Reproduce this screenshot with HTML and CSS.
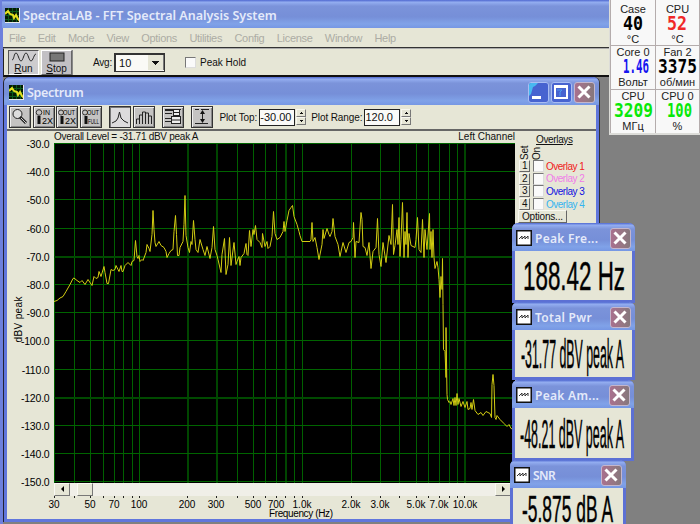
FILE: index.html
```html
<!DOCTYPE html>
<html lang="en">

<head>
    <meta charset="utf-8">
    <title>SpectraLAB - FFT Spectral Analysis System</title>
    <link rel="stylesheet" href="styles.css">
</head>

<body>
    <!-- Shared icons -->
    <svg class="defs" width="0" height="0">
        <symbol id="app-icon" viewBox="0 0 15 15">
            <rect width="15" height="15" fill="#061a06"/>
            <path d="M3.5 0v15M7.5 0v15M11.5 0v15M0 3.5h15M0 7.5h15M0 11.5h15" stroke="#0b5a1c"/>
            <path d="M0 6l3-3 2 3 3 1 1 3 2-3 2 4 2 2" fill="none" stroke="#e6e020" stroke-width="2"/>
            <path d="M0 14.5h15M14.5 0v15" stroke="#e8e8e8"/>
        </symbol>
        <symbol id="wave-icon" viewBox="0 0 16 16">
            <rect x=".75" y=".75" width="14.5" height="14.5" fill="#fff" stroke="#111" stroke-width="1.5"/>
            <path d="M3 9l3-3v3l3-3v3l3-3v3" fill="none" stroke="#333"/>
        </symbol>
        <symbol id="close-icon" viewBox="0 0 20 20">
            <path d="M4.5 4.5l11 11M15.5 4.5l-11 11" stroke="#fff" stroke-width="3"/>
        </symbol>
    </svg>

    <!-- Main window -->
    <div class="main-window">
        <div class="titlebar main-title">
            <svg class="app-icon"><use href="#app-icon"/></svg>
            <span>SpectraLAB - FFT Spectral Analysis System</span>
        </div>
        <div class="menu">
            <span>File</span><span>Edit</span><span>Mode</span><span>View</span><span>Options</span><span>Utilities</span><span>Config</span><span>License</span><span>Window</span><span>Help</span>
        </div>
        <div class="toolbar">
            <div class="big-btn pressed">
                <svg width="26" height="12" viewBox="0 0 26 12"><path d="M1 9C3 9 3 2 5 2s3 8 5 8 3-8 5-8 3 8 5 8 3-7 5-7" fill="none" stroke="#222"/></svg>
                <span><u>R</u>un</span>
            </div>
            <div class="big-btn">
                <svg width="16" height="12" viewBox="0 0 16 12"><rect x="1" y="2" width="14" height="8" fill="#777" stroke="#222"/></svg>
                <span><u>S</u>top</span>
            </div>
            <span class="avg-label">Avg:</span>
            <div class="select"><span>10</span><i></i></div>
            <span class="check"></span>
            <span>Peak Hold</span>
        </div>

        <div class="child-window">
            <div class="titlebar child-title">
                <svg class="app-icon"><use href="#app-icon"/></svg>
                <span class="caption">Spectrum</span>
                <div class="win-btn"><svg width="20" height="20"><path d="M1 14V1h9L7 4 5 5 3 12z" fill="#48b8f0"/><rect x="4" y="14" width="9" height="3" fill="#fff"/></svg></div>
                <div class="win-btn"><svg width="20" height="20"><path d="M3 4.5h14" stroke="#fff" stroke-width="3"/><path d="M4 4v12h12V4" fill="none" stroke="#fff" stroke-width="2"/><path d="M6 8h5l-2 2v4" fill="none" stroke="#4c9cf0"/></svg></div>
                <div class="win-btn close"><svg width="20" height="20"><use href="#close-icon"/></svg></div>
            </div>
            <div class="plot-tools">
                <div class="tool"><svg width="20" height="20"><circle cx="7.500" cy="7" r="4.500" fill="#ddd" stroke="#222"/><path d="M10 10l6 6" stroke="#222" stroke-width="3"/><path d="M11 11l5 5" stroke="#ccc"/></svg></div>
                <div class="tool"><svg width="20" height="20"><circle cx="5" cy="5.500" r="2.800" fill="none" stroke="#333"/><path d="M5 9v8" stroke="#111" stroke-width="3"/><text x="9" y="8">IN</text><text x="8" y="17" class="large">2X</text></svg></div>
                <div class="tool"><svg width="20" height="20"><circle cx="4" cy="5.500" r="2.500" fill="none" stroke="#333"/><path d="M5 9v8" stroke="#111" stroke-width="3"/><text x="6" y="8" textLength="12" lengthAdjust="spacingAndGlyphs">OUT</text><text x="8" y="17" class="large">2X</text></svg></div>
                <div class="tool"><svg width="20" height="20"><circle cx="4" cy="5.500" r="2.500" fill="none" stroke="#333"/><path d="M5 9v8" stroke="#111" stroke-width="3"/><text x="6" y="8" textLength="12" lengthAdjust="spacingAndGlyphs">OUT</text><text x="7" y="17" textLength="11" lengthAdjust="spacingAndGlyphs">FULL</text></svg></div>
                <div class="tool on gap"><svg width="20" height="20"><path d="M2 16l4-2 2-3 1.500-6L11 11l3 3 4 2" fill="none" stroke="#222"/></svg></div>
                <div class="tool"><svg width="20" height="20"><path d="M2.500 17v-5h3v5V8h3v9V5h3v12V6h3v11V9h3v8" fill="none" stroke="#222"/></svg></div>
                <div class="tool gap"><svg width="20" height="20"><path d="M2 3.500h10M2 6.500h7M2 11.500h7M2 14.500h7" stroke="#222"/><rect x="10.500" y="2.500" width="6" height="6" fill="#eee" stroke="#222"/><rect x="8.500" y="9.500" width="9" height="7" fill="#eee" stroke="#222"/><path d="M2 2.500h16M11 5.500h6M9 13h8" stroke="#222"/></svg></div>
                <div class="tool gap"><svg width="20" height="20"><path d="M3 2.500h4M3 16.500h13M9 2.500h8M10.500 5v9" stroke="#222"/><path d="M10.500 3l-2.500 4h5zM10.500 16l-2.500-4h5z" fill="#111"/></svg></div>
                <span class="tool-label">Plot Top:</span><div class="num">-30.00</div><div class="spin"><i></i><i></i></div>
                <span class="tool-label">Plot Range:</span><div class="num">120.0</div><div class="spin"><i></i><i></i></div>
            </div>
            <div class="plot-body">
                <div class="plot-col">
                    <div class="plot-head"><span class="level">Overall Level = -31.71 dBV peak A</span><span>Left Channel</span></div>
                    <svg class="plot" id="plot" width="461" height="340" viewBox="54 143.500 461 340">
                        <rect x="54" y="143.500" width="461" height="340" fill="#000"/>
                        <g id="grid"></g>
                        <polyline class="trace" points="54,302 57,301 60,298.500 63,297 66,292 70,285 73,279 74,278.500 77,281 80,283 82,281 85,285 88,280 92,286 94,277 96,279 98,278 99,272 101,277 104,267 105,273 107,284 108.500,284 111,270 113,271 115,270 116,266 118,270 119,272 121,266 122,272 123,272 125,266 128,263 131,266 132,262 134,261 135.500,241 137,257 138,259 139,256 140,262 142,260 143,261 146,253 147,245 149,249 150,252 152,235 153,211 154,230 155,243 156,247 159,242 161,246 164,248 166,252 167,258 169,254 171,251 173,250 174,232 175.500,216 176.500,235 177.500,256 179,256 180,248 183,242 184,225 185,196 186,236 188,248 189.500,253 191,242 192,245 193.500,221 195,240 196,250 198,253 200,240 203,250 205,256 207,247 210,259 212,248 213.500,227 215,250 217,256 218,260 221,273 222,255 224.500,239 226,275 228,265 229.500,238 231,266 234,243 236,265 237,262 239,257 240,266 241,258 244,254 246,244 247,255 248,256 249.500,231 251,247 253,230 254,235 255.500,226 257,240 260,243 262,248 262.500,234 265,247 267,242 268,249 270,247 272,237 273.500,212 275,234 277,240 280,238 283,232 284,222 285,232 287,221 289,211 291,208 292.500,206 294,217 297,225 299,232 300,236 302,242 310,242 311,240 312,223 313,242 315,238 317,248 319,260 322,245 323,230 324,239 327,229 329,235 330,237 332,232 333,219 335,237 338,245 340,257 343,243 346,253 349,243 351,242 353,238 353.500,223 355,258 356,242 359,243 361,213 362,220 363,247 365,248 367,256 369,243 371,269 373,252 376,248 377.500,219 379,255 381,267 383,243 386,263 389,236 391,245 392.500,205 393.500,255 395,246 397,230 398,245 399,218 400,257 401,240 402.500,203 404,258 405,232 406,245 407,213 408,258 409,234 411,246 415,248 416,240 417.500,218 419,250 421,253 422.500,220 424,258 425,230 427,250 429.500,214 430,250 431,232 432,258 433,230 434,258 435,269 437,262 438,268 439,280 440,298 441,277 442,290 442.500,259 443,305 443.500,350 445,352 446,378 446,328 447,395 447.500,400 449,403 450,402 451,405 453,399 454,406 455,398 456,406 457,394 458,405 459,399 461,407 463,402 465,408 467,402 468,410 470,409 471,403 472,410 473.500,400 475,411 478,415 481,413 483,416 486,412 490,414 491.500,418 492,385 493,375 494,386 495,418 496,420 497,416 500,420 504,424 507,427 509,425 511,429 515,430"/>
                        <text class="axis-title" transform="translate(22 343) rotate(-90)" textLength="46">dBV peak</text>
                    </svg>
                    <div class="scroll"><span class="arrow left"></span><span class="thumb"></span><span class="arrow right"></span></div>
                    <svg class="xaxis" id="xaxis" width="461" height="21" viewBox="54 496 461 21">
                        <text x="269" y="517" textLength="64">Frequency (Hz)</text>
                    </svg>
                </div>
                <div class="overlays">
                    <div class="ov-head">Overlays</div>
                    <div class="ov-cols"><span>Set</span><span>On</span></div>
                    <div class="ov-row"><b>1</b><i></i><span class="c1">Overlay 1</span></div>
                    <div class="ov-row"><b>2</b><i></i><span class="c2">Overlay 2</span></div>
                    <div class="ov-row"><b>3</b><i></i><span class="c3">Overlay 3</span></div>
                    <div class="ov-row"><b>4</b><i></i><span class="c4">Overlay 4</span></div>
                    <div class="ov-options">Options...</div>
                </div>
            </div>
        </div>
    </div>

    <!-- Floating readouts -->
    <div class="readout peak-freq">
        <div class="titlebar"><svg class="wave"><use href="#wave-icon"/></svg><span class="caption">Peak Fre...</span><div class="win-btn close"><svg width="20" height="20"><use href="#close-icon"/></svg></div></div>
        <svg class="value" height="49"><text x="8" y="39" font-size="40" textLength="102" lengthAdjust="spacingAndGlyphs">188.42 Hz</text></svg>
    </div>
    <div class="readout total-pwr">
        <div class="titlebar"><svg class="wave"><use href="#wave-icon"/></svg><span class="caption">Total Pwr</span><div class="win-btn close"><svg width="20" height="20"><use href="#close-icon"/></svg></div></div>
        <svg class="value" height="48"><text x="6" y="38" font-size="40" textLength="103" lengthAdjust="spacingAndGlyphs">-31.77 dBV peak A</text></svg>
    </div>
    <div class="readout peak-amp">
        <div class="titlebar"><svg class="wave"><use href="#wave-icon"/></svg><span class="caption">Peak Am...</span><div class="win-btn close"><svg width="20" height="20"><use href="#close-icon"/></svg></div></div>
        <svg class="value" height="52"><text x="5" y="40" font-size="41" textLength="104" lengthAdjust="spacingAndGlyphs">-48.21 dBV peak A</text></svg>
    </div>
    <div class="readout snr">
        <div class="titlebar"><svg class="wave"><use href="#wave-icon"/></svg><span class="caption">SNR</span><div class="win-btn close"><svg width="20" height="20"><use href="#close-icon"/></svg></div></div>
        <svg class="value" height="48"><text x="9" y="34" font-size="36" textLength="91" lengthAdjust="spacingAndGlyphs">-5.875 dB A</text></svg>
    </div>

    <!-- Hardware monitor -->
    <div class="monitor">
        <div class="cell"><span>Case</span><svg><text x="11" y="15" textLength="20" lengthAdjust="spacingAndGlyphs">40</text></svg><span>°C</span></div>
        <div class="cell red"><span>CPU</span><svg><text x="11" y="15" textLength="20" lengthAdjust="spacingAndGlyphs">52</text></svg><span>°C</span></div>
        <div class="cell blue"><span>Core 0</span><svg><text x="11" y="15" textLength="26" lengthAdjust="spacingAndGlyphs">1.46</text></svg><span>Вольт</span></div>
        <div class="cell"><span>Fan 2</span><svg><text x="2" y="15" textLength="39" lengthAdjust="spacingAndGlyphs">3375</text></svg><span>об/мин</span></div>
        <div class="cell green"><span>CPU</span><svg><text x="2" y="15" textLength="39" lengthAdjust="spacingAndGlyphs">3209</text></svg><span>МГц</span></div>
        <div class="cell green"><span>CPU 0</span><svg><text x="11" y="15" textLength="25" lengthAdjust="spacingAndGlyphs">100</text></svg><span>%</span></div>
    </div>

    <script src="plot.js"></script>
</body>

</html>
```
FILE: styles.css
```css
body {
    margin: 0;
    width: 700px;
    height: 524px;
    overflow: hidden;
    position: relative;
    background: #808080;
    font-family: "Liberation Sans", Arial, sans-serif;
    font-size: 11px;
    color: #111;
    white-space: nowrap;
}

svg {
    display: block;
    flex: none;
}

.defs {
    position: absolute;
}

/* Title bars */
.titlebar {
    display: flex;
    align-items: center;
    box-sizing: border-box;
    background: linear-gradient(#4f68d0, #93adf0 8%, #7b93da 22%, #768fd8 60%, #80a2e8 85%, #7697e4);
    color: #e4eafa;
    font-family: "Noto Sans", sans-serif;
    font-weight: 600;
    font-size: 12.5px;
}

.app-icon {
    width: 15px;
    height: 15px;
}

.caption {
    flex: 1;
}

.win-btn {
    box-sizing: border-box;
    width: 21px;
    height: 21px;
    margin-left: 2px;
    border: 1px solid #a9bdf2;
    border-radius: 3px;
    background: #4763d0;
    overflow: hidden;
}

.win-btn.close {
    background: linear-gradient(90deg, #a9708e, #977784 60%, #85777c);
    border-color: #c4b6cc;
}

.win-btn svg {
    margin: -1px 0 0 -1px;
}

/* Main window */
.main-window {
    width: 609px;
    height: 524px;
    box-sizing: border-box;
    border-left: 3px solid #6d80dc;
}

.main-title {
    height: 28px;
    padding: 3px 0 0 3px;
    gap: 3px;
    margin-left: -1px;
    letter-spacing: 0;
}

.menu {
    display: flex;
    gap: 12.3px;
    height: 20px;
    line-height: 20px;
    letter-spacing: -0.3px;
    box-sizing: border-box;
    padding-left: 6px;
    background: #e6e6d6;
    border-bottom: 1px solid #333;
    color: #acaca4;
}

.toolbar {
    display: flex;
    align-items: center;
    height: 29px;
    box-sizing: border-box;
    padding-left: 4px;
    border-top: 1px solid #aaa;
    border-bottom: 2px solid #111;
    border-left: 1px solid #222;
    background: #e6e6d6;
}

.big-btn {
    display: flex;
    flex-direction: column;
    align-items: center;
    box-sizing: border-box;
    width: 31px;
    height: 25px;
    margin-right: 2px;
    border: 1px solid;
    border-color: #fff #666 #666 #fff;
    box-shadow: 1px 0 #888;
    background: #c2c0c4;
    line-height: 11px;
    font-size: 10px;
}

.big-btn.pressed {
    border-color: #555 #fff #fff #555;
    box-shadow: none;
    background: #cdccce;
}

.avg-label {
    margin: 0 2px 0 19px;
    font-size: 10px;
    letter-spacing: -0.2px;
}

.select {
    display: flex;
    justify-content: space-between;
    align-items: center;
    box-sizing: border-box;
    width: 51px;
    height: 19px;
    margin-right: 20px;
    padding-left: 3px;
    border: 2px solid #333;
    border-right-width: 1px;
    border-bottom-width: 1px;
    background: #fafaf6;
    font-size: 11px;
}

.select i {
    width: 15px;
    height: 15px;
    background: linear-gradient(#111, #111) 4px 6px / 7px 1px no-repeat, linear-gradient(#111, #111) 5px 7px / 5px 1px no-repeat, linear-gradient(#111, #111) 6px 8px / 3px 1px no-repeat, linear-gradient(#111, #111) 7px 9px / 1px 1px no-repeat, #e6e6d6;
    border-right: 1px solid #777;
}

.check {
    width: 9px;
    height: 9px;
    margin-right: 4px;
    border: 1px solid;
    border-color: #777 #ddd #ddd #777;
    background: #fafafa;
}

.check + span {
    font-size: 10px;
}

/* Spectrum window */
.child-window {
    width: 595px;
    height: 445px;
    box-sizing: border-box;
    margin-left: 1px;
    border: solid #6076dc;
    border-width: 0 3px 3px;
    border-radius: 6px 6px 0 0;
    background: #e6e6d6;
    box-shadow: 1px 0 #333, -1px 0 #223;
}

.child-title {
    height: 28px;
    margin: 0 -3px;
    padding: 3px 4px 0 5px;
    border-radius: 6px 6px 0 0;
}

.child-title .caption {
    padding-left: 3px;
    letter-spacing: -0.3px;
}

.plot-tools {
    display: flex;
    align-items: center;
    height: 24px;
    padding-left: 2px;
    border-bottom: 2px solid #666;
}

.tool {
    box-sizing: border-box;
    width: 22px;
    height: 22px;
    margin-right: 1.7px;
    border: 1px solid #333;
    background: #c4c3c2;
    box-shadow: inset 1px 1px #eee, inset -1px -1px #888;
}

.tool.on {
    background: #dcdbdc;
    box-shadow: inset 1px 1px #777;
}

.tool.gap {
    margin-left: 5.3px;
}

.tool text {
    font-size: 7px;
}

.tool .large {
    font-size: 9px;
}

.tool-label {
    margin: 0 2px 0 5px;
    font-size: 10px;
    letter-spacing: -0.1px;
}

.num {
    box-sizing: border-box;
    width: 36px;
    height: 17px;
    line-height: 14px;
    border: 1px solid #222;
    background: #fafaf8;
    font-size: 11px;
}

.spin {
    display: flex;
    flex-direction: column;
    width: 10px;
    height: 16px;
    margin-left: 1px;
}

.spin i {
    flex: 1;
    box-sizing: border-box;
    border: 1px solid;
    border-color: #f8f8f0 #777 #777 #f8f8f0;
    background: linear-gradient(#111, #111) 3px 3px / 3px 1px no-repeat, linear-gradient(#111, #111) 4px 2px / 1px 1px no-repeat;
}

.spin i + i {
    background: linear-gradient(#111, #111) 3px 2px / 3px 1px no-repeat, linear-gradient(#111, #111) 4px 3px / 1px 1px no-repeat;
}

.plot-body {
    display: flex;
    padding-left: 47px;
}

.plot-col {
    width: 461px;
}

.plot-head {
    display: flex;
    justify-content: space-between;
    height: 12px;
    line-height: 11px;
    font-size: 10px;
}

.level {
    letter-spacing: -0.27px;
}

.plot,
.xaxis {
    overflow: visible;
    font-size: 10px;
}

.plot .tick {
    font-size: 10.5px;
    letter-spacing: -0.2px;
}

.trace {
    fill: none;
    stroke: #d2cc12;
    stroke-width: 1;
}

.scroll {
    display: flex;
    width: 457px;
    height: 13px;
    background: #f0efe8;
}

.arrow,
.thumb {
    box-sizing: border-box;
    width: 16px;
    border: 1px solid;
    border-color: #fafaf4 #777 #777 #fafaf4;
    background: #e6e6d6;
}

.thumb {
    margin-left: 7px;
}

.arrow::before {
    content: "";
    display: block;
    width: 0;
    margin: 2px 0 0 6px;
    border: solid transparent;
    border-width: 3px 3px 3px 0;
    border-right-color: #000;
}

.arrow.right {
    margin-left: auto;
}

.arrow.right::before {
    border-width: 3px 0 3px 3px;
    border-left-color: #000;
}

/* Overlay list */
.overlays {
    padding: 3px 0 0 3px;
    font-size: 10px;
}

.ov-head {
    margin-left: 18px;
    line-height: 11px;
    letter-spacing: -0.35px;
    text-decoration: underline;
}

.ov-cols {
    display: flex;
    height: 15px;
    padding-left: 1px;
    letter-spacing: -0.2px;
}

.ov-cols span {
    writing-mode: vertical-rl;
    transform: rotate(180deg);
    width: 12px;
    line-height: 12px;
}

.ov-row {
    display: flex;
    align-items: center;
    height: 12.6px;
    padding-left: 1px;
    letter-spacing: -0.5px;
}

.ov-row b {
    box-sizing: border-box;
    width: 11px;
    height: 12px;
    line-height: 10px;
    font-weight: normal;
    text-align: center;
    border: 1px solid;
    border-color: #f8f8f0 #666 #666 #f8f8f0;
}

.ov-row i {
    box-sizing: border-box;
    width: 11px;
    height: 12px;
    margin: 0 2px 0 3px;
    border: 1px solid;
    border-color: #777 #ddd #ddd #777;
    background: #fafafa;
}

.c1 { color: #f02020; }
.c2 { color: #f07ce8; }
.c3 { color: #1010e0; }
.c4 { color: #34b4f0; }

.ov-options {
    box-sizing: border-box;
    width: 49px;
    height: 13px;
    padding-left: 3px;
    line-height: 11px;
    letter-spacing: -0.2px;
    border: 1px solid;
    border-color: #f8f8f0 #666 #666 #f8f8f0;
}

/* Readout windows */
.readout {
    position: absolute;
    box-sizing: border-box;
    left: 512px;
    width: 123px;
    border: solid #5c70d4;
    border-width: 0 3px 3px;
    border-radius: 6px 6px 0 0;
    background: #e6e6d6;
}

.readout .titlebar {
    height: 28px;
    margin: 0 -3px;
    padding: 2px 4px 0;
    border-radius: 6px 6px 0 0;
}

.wave {
    width: 16px;
    height: 16px;
}

.readout .caption {
    padding-left: 3px;
    font-size: 12px;
    letter-spacing: 0.3px;
}

.value {
    width: 100%;
    overflow: visible;
    stroke: #111;
    stroke-width: 0.5;
}

.peak-freq { top: 223px; height: 80px; }
.total-pwr { top: 302px; height: 78px; }
.peak-amp { top: 380px; width: 122px; height: 81px; }
.snr { top: 460px; left: 510px; width: 116px; height: 80px; }

.snr .caption {
    letter-spacing: -0.5px;
}

/* Hardware monitor */
.monitor {
    position: absolute;
    left: 609px;
    top: 0;
    box-sizing: border-box;
    width: 91px;
    height: 135px;
    display: grid;
    grid-template-columns: 44px 43px;
    grid-template-rows: 45px 43px 43px;
    gap: 1px;
    padding-left: 1px;
    background: #b4acac;
    border: solid #dcdcd8;
    border-width: 0 0 2px 1px;
}

.cell {
    display: flex;
    flex-direction: column;
    align-items: center;
    background: #f8f8f8;
    line-height: 12px;
    color: #222;
}

.cell:nth-child(-n+2) {
    padding-top: 3px;
    height: 42px;
}

.cell svg {
    width: 43px;
    height: 18px;
    overflow: visible;
    font-family: "DejaVu Sans Mono", monospace;
    font-weight: bold;
    font-size: 19px;
    fill: #000;
}

.red svg { fill: #f02828; }
.blue svg { fill: #1414f0; }
.green svg { fill: #08e808; }
```
FILE: plot.js
```js
var NS = "http://www.w3.org/2000/svg";
var grid = document.getElementById("grid");
var plot = document.getElementById("plot");
var xaxis = document.getElementById("xaxis");

function add(parent, tag, attrs, text) {
    var el = document.createElementNS(NS, tag);
    for (var key in attrs) el.setAttribute(key, attrs[key]);
    if (text) el.textContent = text;
    parent.appendChild(el);
}

// vertical lines, 30 Hz to 10 kHz on a log scale
var xs = [54, 74, 90, 103, 114, 123, 132, 139, 187, 216, 237, 253, 265, 276, 285, 294, 302, 351, 380, 399, 416, 428, 439, 449, 457, 464];
var wide = [187, 216, 285, 464];
xs.forEach(function (x) {
    var thick = wide.indexOf(x) >= 0;
    add(grid, "rect", { x: x, y: 143.5, width: thick ? 2 : 1, height: 340, fill: thick ? "#004600" : "#006000" });
    add(xaxis, "rect", { x: x, y: 496, width: 1, height: 2, fill: "#222" });
});

// horizontal lines every 10 dB
for (var i = 0; i <= 12; i++) {
    var y = Math.round(144 + i * 28.2) - 0.5;
    var thickRow = i == 4 || i == 9;
    add(grid, "rect", { x: 54, y: y, width: 461, height: thickRow ? 2 : 1, fill: thickRow ? "#004a00" : "#006400" });
    add(plot, "text", { x: 49.5, y: y + 4.5, "text-anchor": "end", "class": "tick" }, (-30 - i * 10).toFixed(1));
}

var labels = { 54: "30", 90: "50", 114: "70", 139: "100", 187: "200", 216: "300", 253: "500", 276: "700", 302: "1.0k", 351: "2.0k", 380: "3.0k", 416: "5.0k", 439: "7.0k", 465: "10.0k" };
for (var x in labels) {
    add(xaxis, "text", { x: x, y: 507.5, "text-anchor": "middle" }, labels[x]);
}
```
